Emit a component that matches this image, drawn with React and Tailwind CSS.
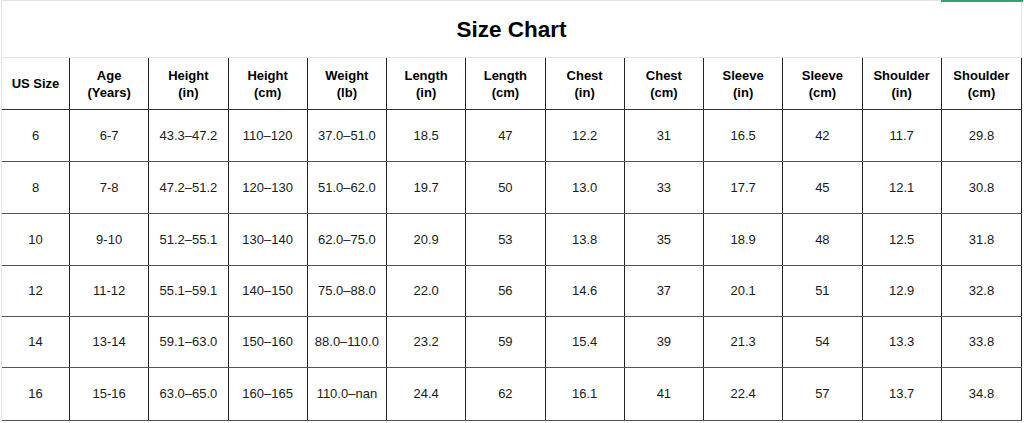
import React from 'react';

const headers = [
  ['US Size'],
  ['Age', '(Years)'],
  ['Height', '(in)'],
  ['Height', '(cm)'],
  ['Weight', '(lb)'],
  ['Length', '(in)'],
  ['Length', '(cm)'],
  ['Chest', '(in)'],
  ['Chest', '(cm)'],
  ['Sleeve', '(in)'],
  ['Sleeve', '(cm)'],
  ['Shoulder', '(in)'],
  ['Shoulder', '(cm)'],
];

const rows = [
  ['6', '6-7', '43.3–47.2', '110–120', '37.0–51.0', '18.5', '47', '12.2', '31', '16.5', '42', '11.7', '29.8'],
  ['8', '7-8', '47.2–51.2', '120–130', '51.0–62.0', '19.7', '50', '13.0', '33', '17.7', '45', '12.1', '30.8'],
  ['10', '9-10', '51.2–55.1', '130–140', '62.0–75.0', '20.9', '53', '13.8', '35', '18.9', '48', '12.5', '31.8'],
  ['12', '11-12', '55.1–59.1', '140–150', '75.0–88.0', '22.0', '56', '14.6', '37', '20.1', '51', '12.9', '32.8'],
  ['14', '13-14', '59.1–63.0', '150–160', '88.0–110.0', '23.2', '59', '15.4', '39', '21.3', '54', '13.3', '33.8'],
  ['16', '15-16', '63.0–65.0', '160–165', '110.0–nan', '24.4', '62', '16.1', '41', '22.4', '57', '13.7', '34.8'],
];

const rowHeights = ['h-[52px]', 'h-[52px]', 'h-[52px]', 'h-[51px]', 'h-[51px]', 'h-[53px]'];

const cols = 'grid grid-cols-[68px_repeat(11,79.25px)_80.5px]';

const SizeChart = () => {
  return (
    <div className="w-[1024px] h-[423px] bg-white overflow-hidden text-[#111]" style={{ fontFamily: '"Liberation Sans", Arial, sans-serif' }}>
      <div className="relative ml-[1px] w-[1021px] border-l border-[#e3e3e3]">
        {/* selected cell marker */}
        <div className="absolute top-0 left-[939px] w-[82px] h-[2px] bg-[#2da571]" />

        {/* title row */}
        <div className="h-[58px] border-t border-b border-r border-[#e3e3e3] flex items-center justify-center">
          <h1 className="text-[22.5px] font-bold text-black pt-[1px]">Size Chart</h1>
        </div>

        {/* header */}
        <div className={`${cols} h-[52px] border-b border-[#333]`}>
          {headers.map((h, i) => (
            <div key={i} className="border-r border-[#222] flex flex-col items-center justify-center text-[13px] font-bold leading-[17px] text-black">
              {h.map((line, j) => (
                <span key={j}>{line}</span>
              ))}
            </div>
          ))}
        </div>

        {/* body */}
        {rows.map((row, r) => (
          <div key={r} className={`${cols} ${rowHeights[r]} border-b border-[#555]`}>
            {row.map((cell, c) => (
              <div key={c} className="border-r border-[#222] flex items-center justify-center text-[13px] text-[#1a1a1a]">
                {cell}
              </div>
            ))}
          </div>
        ))}

        {/* grid below */}
        <div className={`${cols} h-[6px]`}>
          {headers.map((_, i) => (
            <div key={i} className="border-r border-[#e3e3e3]" />
          ))}
        </div>
      </div>
    </div>
  );
};

export default SizeChart;
